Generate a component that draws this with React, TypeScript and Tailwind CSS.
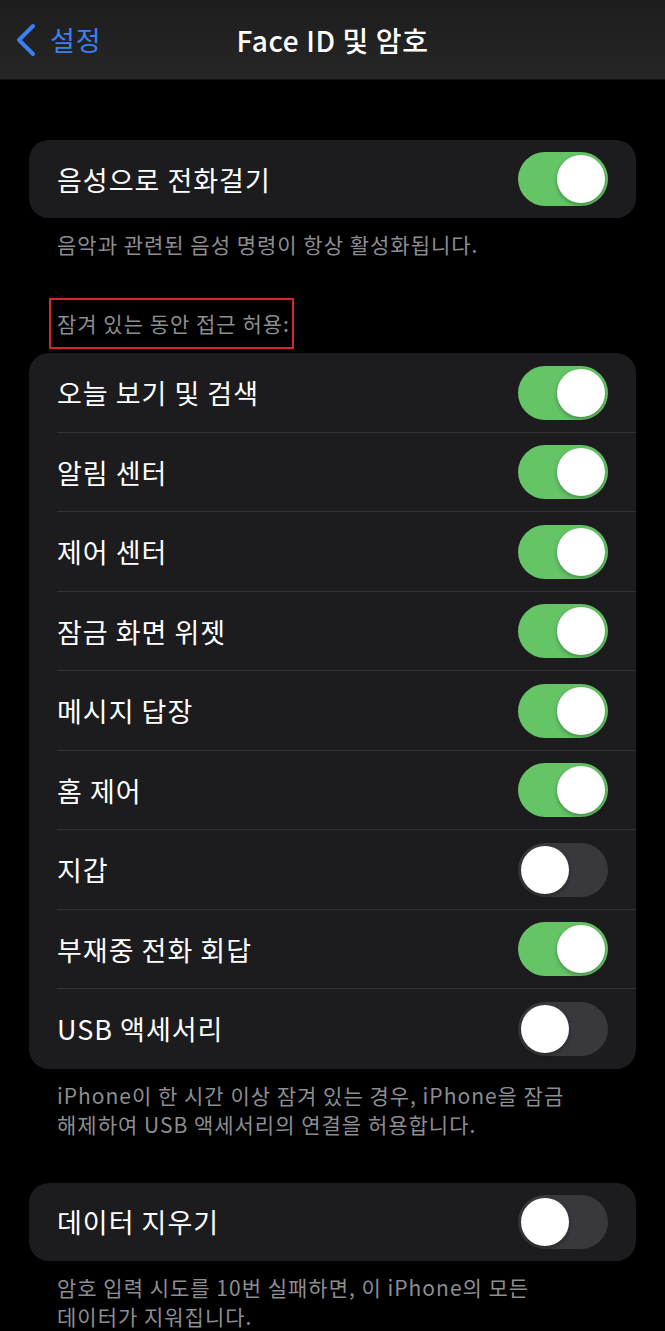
import React from "react";

type Row = { label: string; on: boolean };

const LOCKED_ROWS: Row[] = [
  { label: "오늘 보기 및 검색", on: true },
  { label: "알림 센터", on: true },
  { label: "제어 센터", on: true },
  { label: "잠금 화면 위젯", on: true },
  { label: "메시지 답장", on: true },
  { label: "홈 제어", on: true },
  { label: "지갑", on: false },
  { label: "부재중 전화 회답", on: true },
  { label: "USB 액세서리", on: false },
];

const FONT = "font-['Noto_Sans_CJK_KR','Noto_Sans',sans-serif]";

function Toggle({ on }: { on: boolean }) {
  return (
    <div
      className={`flex h-[54px] w-[90px] shrink-0 items-center rounded-full p-[3px] ${
        on ? "justify-end bg-[#65c466]" : "justify-start bg-[#39393d]"
      }`}
    >
      <div className="h-[48px] w-[48px] rounded-full bg-white shadow-[0_2px_4px_rgba(0,0,0,0.3)]" />
    </div>
  );
}

function SettingRow({ row, divider }: { row: Row; divider: boolean }) {
  return (
    <div className="relative flex h-[79.5px] items-center justify-between pl-[28px] pr-[28px]">
      <span className="text-[27px] leading-none tracking-[1px] text-white">{row.label}</span>
      <Toggle on={row.on} />
      {divider && <div className="absolute bottom-0 left-[28px] right-0 h-px bg-[#323234]" />}
    </div>
  );
}

function Footer({ children }: { children: React.ReactNode }) {
  return (
    <p className="px-[57px] pt-[12px] text-[21px] leading-[29px] tracking-[1px] text-[#8d8d92]">
      {children}
    </p>
  );
}

export default function App() {
  return (
    <div className={`min-h-[1331px] w-full bg-black ${FONT}`}>
      {/* Nav bar */}
      <div className="relative flex h-[80px] items-center justify-center border-b border-[#141414] bg-gradient-to-b from-[#1d1d1d] to-[#262626]">
        <div className="absolute left-[14px] top-0 flex h-full items-center gap-[12px]">
          <svg width="24" height="34" viewBox="0 0 24 34" fill="none">
            <path d="M19 3 L5 17 L19 31" stroke="#3a80f0" strokeWidth="4" strokeLinecap="round" strokeLinejoin="round" />
          </svg>
          <span className="text-[27px] leading-none tracking-[1px] text-[#3a80f0]">설정</span>
        </div>
        <h1 className="text-[28px] font-medium leading-none tracking-[0.6px] text-white">
          Face ID 및 암호
        </h1>
      </div>

      <div className="flex flex-col pt-[60px]">
        {/* Voice dial */}
        <div className="mx-[29px] overflow-hidden rounded-[20px] bg-[#1c1c1e]">
          <div className="flex h-[78px] items-center justify-between pl-[28px] pr-[28px]">
            <span className="text-[27px] leading-none tracking-[1px] text-white">음성으로 전화걸기</span>
            <Toggle on />
          </div>
        </div>
        <Footer>음악과 관련된 음성 명령이 항상 활성화됩니다.</Footer>

        {/* Section header */}
        <div className="mt-[39px] px-[49px]">
          <div className="inline-flex h-[51px] items-center border-2 border-[#d4262c] pl-[6px] pr-[2px]">
            <span className="text-[21px] leading-none tracking-[1px] text-[#8d8d92]">
              잠겨 있는 동안 접근 허용:
            </span>
          </div>
        </div>

        <div className="mx-[29px] mt-[4px] overflow-hidden rounded-[20px] bg-[#1c1c1e]">
          {LOCKED_ROWS.map((row, i) => (
            <SettingRow key={row.label} row={row} divider={i < LOCKED_ROWS.length - 1} />
          ))}
        </div>
        <Footer>
          iPhone이 한 시간 이상 잠겨 있는 경우, iPhone을 잠금
          <br />
          해제하여 USB 액세서리의 연결을 허용합니다.
        </Footer>

        {/* Erase data */}
        <div className="mx-[29px] mt-[44px] overflow-hidden rounded-[20px] bg-[#1c1c1e]">
          <div className="flex h-[78px] items-center justify-between pl-[28px] pr-[28px]">
            <span className="text-[27px] leading-none tracking-[1px] text-white">데이터 지우기</span>
            <Toggle on={false} />
          </div>
        </div>
        <Footer>
          암호 입력 시도를 10번 실패하면, 이 iPhone의 모든
          <br />
          데이터가 지워집니다.
        </Footer>
      </div>
    </div>
  );
}
